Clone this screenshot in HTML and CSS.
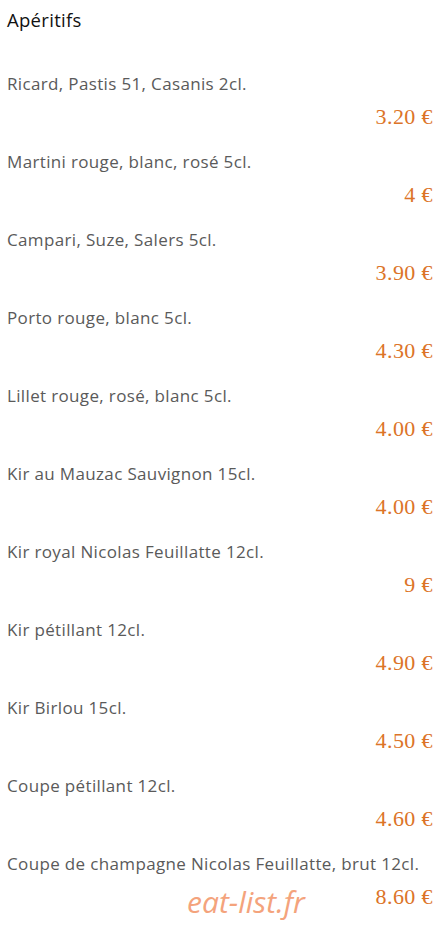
FILE: index.html
```html
<!DOCTYPE html>
<html lang="fr">
<head>
    <meta charset="UTF-8">
    <meta name="viewport" content="width=device-width, initial-scale=1.0">
    <title>Apéritifs</title>
    <link rel="stylesheet" href="styles.css">
</head>
<body>
    <div class="menu">
        <h1>Apéritifs</h1>

        <div class="item">
            <p class="name">Ricard, Pastis 51, Casanis 2cl.</p>
            <p class="price">3.20 €</p>
        </div>
        <div class="item">
            <p class="name">Martini rouge, blanc, rosé 5cl.</p>
            <p class="price">4 €</p>
        </div>
        <div class="item">
            <p class="name">Campari, Suze, Salers 5cl.</p>
            <p class="price">3.90 €</p>
        </div>
        <div class="item">
            <p class="name">Porto rouge, blanc 5cl.</p>
            <p class="price">4.30 €</p>
        </div>
        <div class="item">
            <p class="name">Lillet rouge, rosé, blanc 5cl.</p>
            <p class="price">4.00 €</p>
        </div>
        <div class="item">
            <p class="name">Kir au Mauzac Sauvignon 15cl.</p>
            <p class="price">4.00 €</p>
        </div>
        <div class="item">
            <p class="name">Kir royal Nicolas Feuillatte 12cl.</p>
            <p class="price">9 €</p>
        </div>
        <div class="item">
            <p class="name">Kir pétillant 12cl.</p>
            <p class="price">4.90 €</p>
        </div>
        <div class="item">
            <p class="name">Kir Birlou 15cl.</p>
            <p class="price">4.50 €</p>
        </div>
        <div class="item">
            <p class="name">Coupe pétillant 12cl.</p>
            <p class="price">4.60 €</p>
        </div>
        <div class="item">
            <p class="name">Coupe de champagne Nicolas Feuillatte, brut 12cl.</p>
            <p class="price">8.60 €</p>
        </div>
    </div>

    <!-- filigrane -->
    <div class="watermark">eat-list.fr</div>
</body>
</html>
```

FILE: styles.css
```css
body {
    margin: 0;
    background-color: #fff;
    font-family: "Open Sans", Lato, sans-serif;
}
.menu {
    padding: 8px 6px 0 7px;
}
h1 {
    margin: 0 0 40px;
    font-size: 18.5px;
    line-height: 24px;
    font-weight: 500;
    letter-spacing: 0.3px;
    color: #111;
}
.item {
    margin-bottom: 18px;
}
.name {
    margin: 0;
    font-size: 17px;
    line-height: 24px;
    letter-spacing: 0.35px;
    color: #5a5a5a;
}
.price {
    margin: 6px 0 0;
    text-align: right;
    font-family: "Liberation Serif", serif;
    font-size: 22px;
    line-height: 30px;
    letter-spacing: 0.4px;
    color: #dc7428;
}
.watermark {
    position: absolute;
    left: 187px;
    top: 883px;
    font-family: "Open Sans", sans-serif;
    font-style: italic;
    font-size: 30px;
    line-height: 38px;
    color: #f4a37c;
}
```
